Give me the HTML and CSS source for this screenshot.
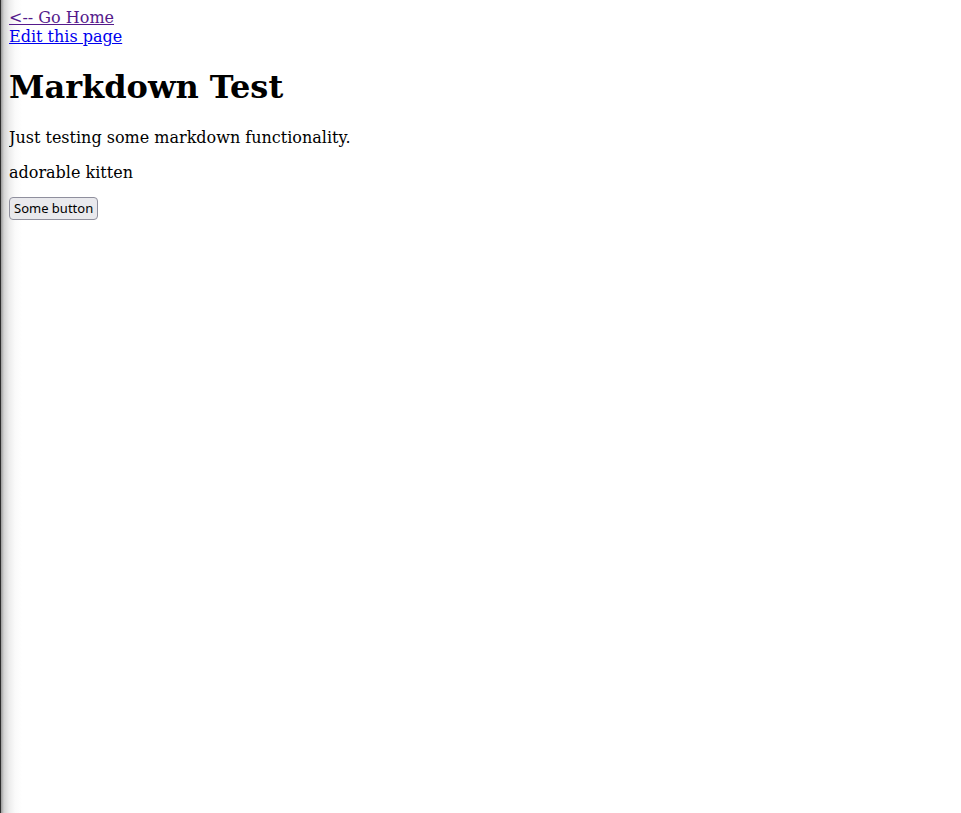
FILE: index.html
```html
<!DOCTYPE html>
<html>
<head>
<meta charset="utf-8">
<title>Markdown Test</title>
<link rel="stylesheet" href="styles.css">
</head>
<body>
<div class="nav">
<a class="visited" href="#home">&lt;-- Go Home</a><br>
<a class="link" href="#edit">Edit this page</a>
</div>
<h1>Markdown Test</h1>
<p>Just testing some markdown functionality.</p>
<p>adorable kitten</p>
<p class="actions"><button class="btn">Some button</button></p>
</body>
</html>
```
FILE: styles.css
```css
html {
  min-height: 100%;
  background: #fff linear-gradient(to right, #2e2e2e 0, #2e2e2e 1px, #9a9a9a 1px, #d4d4d4 4px, #ececec 9px, #fafafa 15px, #fff 22px) no-repeat;
  background-attachment: fixed;
}
body {
  margin: 8px 8px 8px 9px;
  font-family: "DejaVu Serif", serif;
  font-size: 16px;
  color: #000;
}
.visited {
  color: #551a8b;
}
.link {
  color: #0000ee;
}
h1 {
  font-size: 32px;
  margin: 22.44px 0 21.44px;
}
.actions {
  margin: -1px 0 0;
}
.btn {
  box-sizing: border-box;
  height: 23px;
  font-family: "Noto Sans", "Open Sans", sans-serif;
  font-size: 13px;
  line-height: 17px;
  padding: 2px 4px;
  background: #e9e9ed;
  border: 1px solid #8f8f9d;
  border-radius: 4px;
  color: #000;
  vertical-align: top;
}
```
